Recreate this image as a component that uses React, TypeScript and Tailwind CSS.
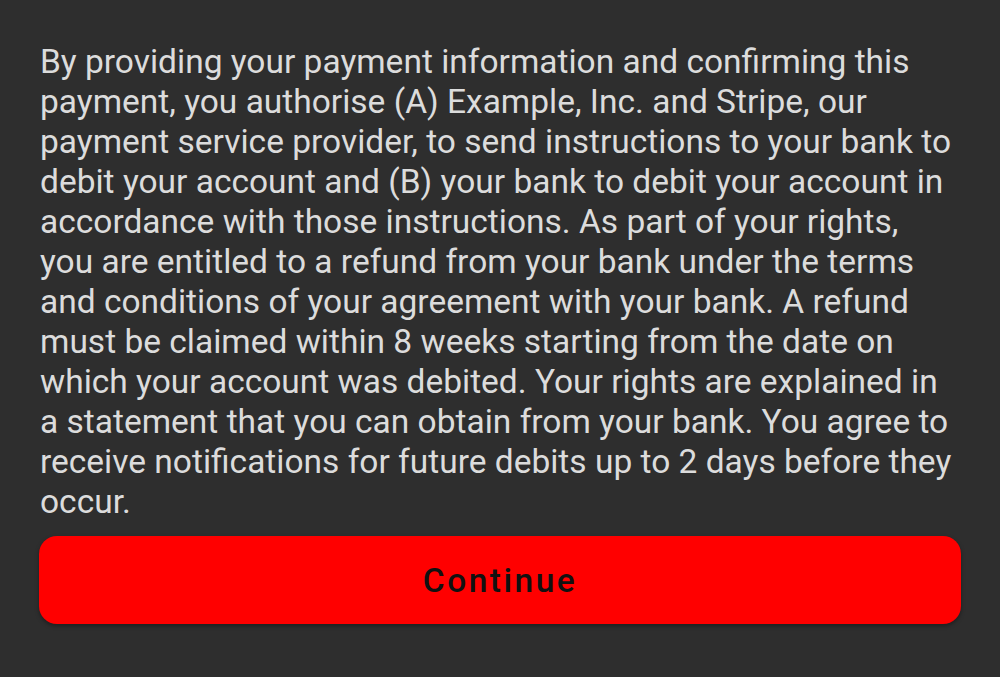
const MANDATE_TEXT =
	"By providing your payment information and confirming this payment, you authorise (A) Example, Inc. and Stripe, our payment service provider, to send instructions to your bank to debit your account and (B) your bank to debit your account in accordance with those instructions. As part of your rights, you are entitled to a refund from your bank under the terms and conditions of your agreement with your bank. A refund must be claimed within 8 weeks starting from the date on which your account was debited. Your rights are explained in a statement that you can obtain from your bank. You agree to receive notifications for future debits up to 2 days before they occur.";

const App = () => {
	return (
		<div className="w-[1000px] h-[677px] bg-[#2e2e2e] font-['Roboto',sans-serif] pl-[40px] pr-[39px] pt-[42px]">
			<p className="text-[33.5px] leading-[40px] text-[#dcdcdc] pr-[7px]">{MANDATE_TEXT}</p>
			<button
				type="button"
				className="mt-[14px] w-[922px] -ml-px h-[88px] rounded-[18px] bg-[#ff0000] shadow-[0_2px_4px_rgba(0,0,0,0.35)] flex items-center justify-center pt-[3px]"
			>
				<span className="text-[33.5px] font-medium tracking-[2.5px] text-[#111]">Continue</span>
			</button>
		</div>
	);
};

export default App;
